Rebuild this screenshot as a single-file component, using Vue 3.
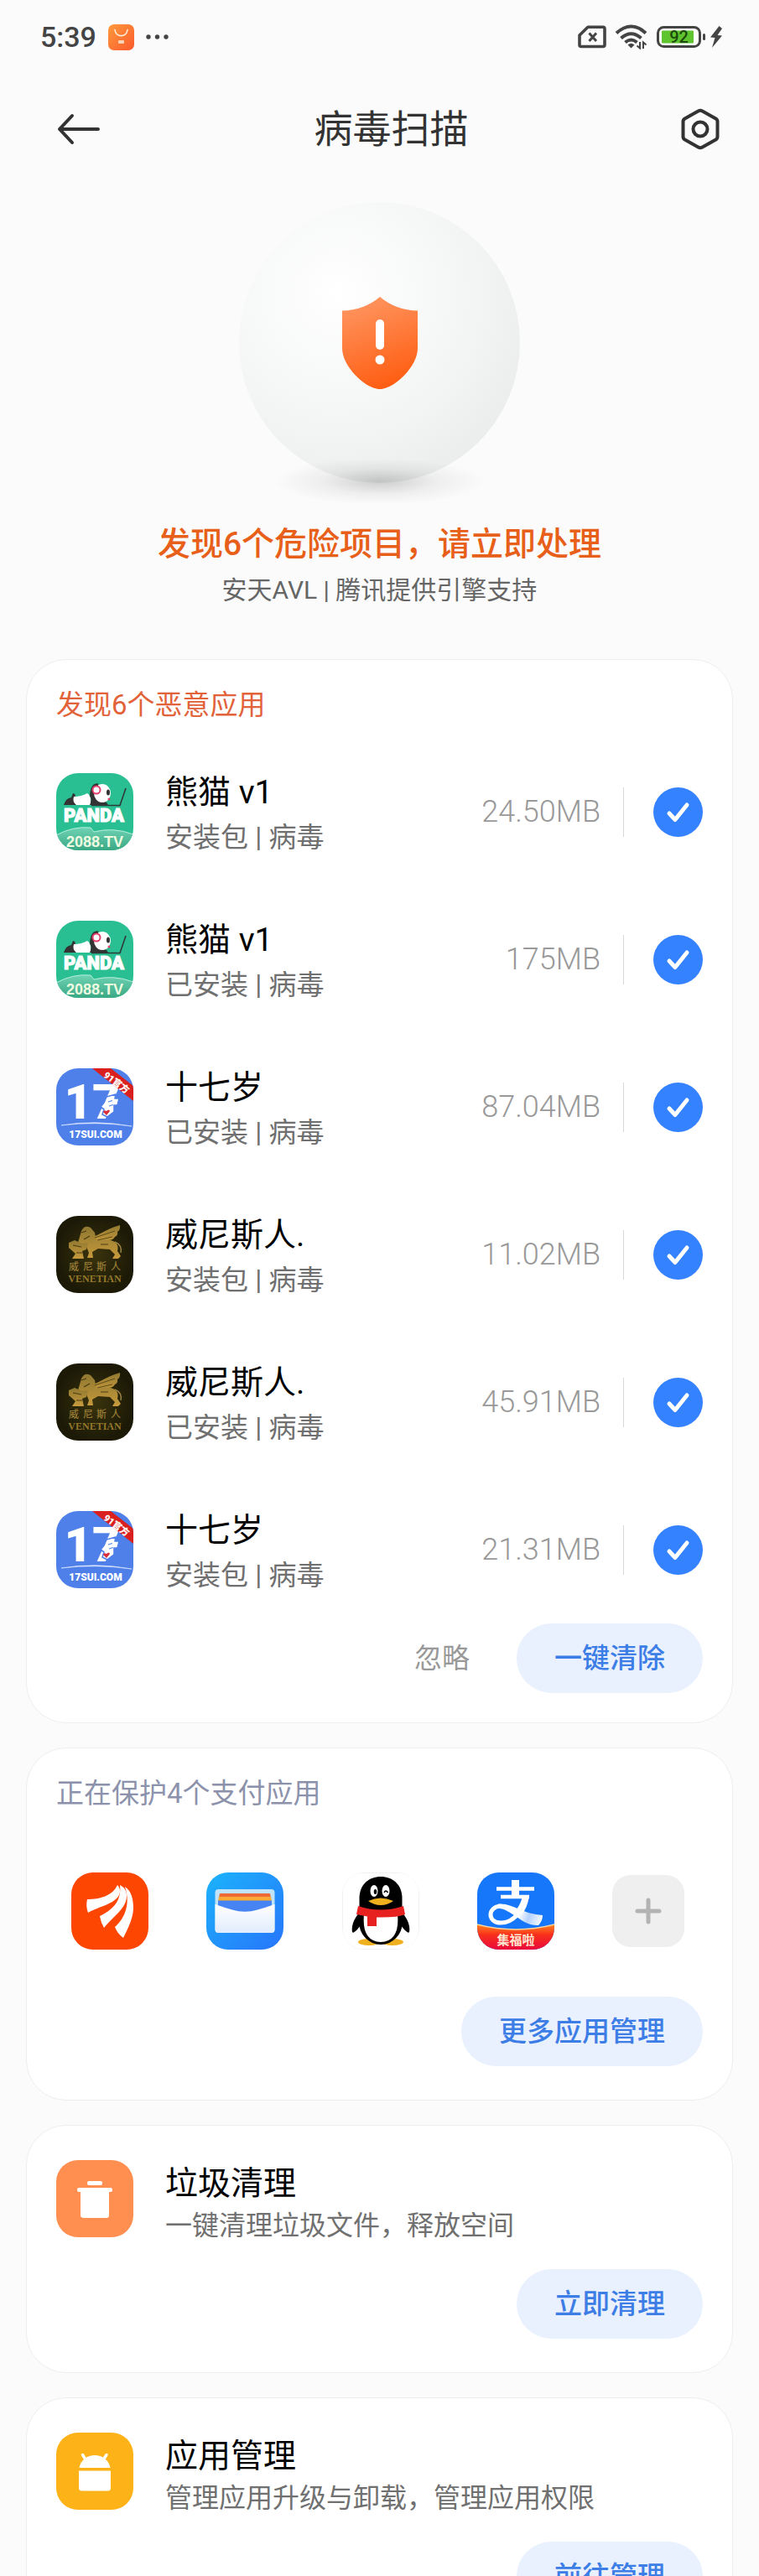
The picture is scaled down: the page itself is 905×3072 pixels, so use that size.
<script setup>
  import { ref } from 'vue';

  const threats = ref([
    { id: 1, icon: 'panda', name: '熊猫 v1', type: '安装包', size: '24.50MB', checked: true },
    { id: 2, icon: 'panda', name: '熊猫 v1', type: '已安装', size: '175MB', checked: true },
    { id: 3, icon: 'seventeen', name: '十七岁', type: '已安装', size: '87.04MB', checked: true },
    { id: 4, icon: 'venetian', name: '威尼斯人.', type: '安装包', size: '11.02MB', checked: true },
    { id: 5, icon: 'venetian', name: '威尼斯人.', type: '已安装', size: '45.91MB', checked: true },
    { id: 6, icon: 'seventeen', name: '十七岁', type: '安装包', size: '21.31MB', checked: true },
  ]);

  const tools = [
    { icon: 'trash', title: '垃圾清理', text: '一键清理垃圾文件，释放空间', action: '立即清理' },
    { icon: 'android', title: '应用管理', text: '管理应用升级与卸载，管理应用权限', action: '前往管理' },
  ];

  function removeChecked() {
    threats.value = threats.value.filter((item) => !item.checked);
  }

  function ignoreAll() {
    for (let i = 0; i < threats.value.length; i++) {
      threats.value[i].checked = false;
    }
  }
</script>

<template>
  <div class="screen">
    <div class="status-bar">
      <span class="time">5:39</span>
      <svg class="store" viewBox="0 0 31 31" width="31" height="31">
        <defs>
          <linearGradient id="store" x1="0" y1="0" x2="1" y2="1">
            <stop offset="0" stop-color="#ff9a3d" />
            <stop offset="1" stop-color="#fb5a2c" />
          </linearGradient>
        </defs>
        <rect width="31" height="31" rx="7" fill="url(#store)" />
        <path d="M8 6.500C9 16 22 16 23 6.500" fill="none" stroke="#fff1dc" stroke-width="1.600" stroke-linecap="round" />
        <rect x="12" y="19" width="7" height="4" rx="1" fill="#ffd2b5" />
      </svg>
      <svg class="more" viewBox="0 0 28 6" width="28" height="6" fill="#444">
        <circle cx="3" cy="3" r="2.700" />
        <circle cx="13.500" cy="3" r="2.700" />
        <circle cx="24" cy="3" r="2.700" />
      </svg>
      <div class="indicators">
        <svg viewBox="0 0 34 28" width="34" height="28" fill="none" stroke="#444" stroke-width="3.600" stroke-linejoin="round">
          <path d="M12 2.300H30Q32 2.300 32 4.300V23.500Q32 25.500 30 25.500H4Q2 25.500 2 23.500V12Z" />
          <path d="M13.500 9.500L22 19M22 9.500L13.500 19" stroke-width="3" />
        </svg>
        <svg viewBox="0 0 40 30" width="40" height="30" fill="none" stroke="#444" stroke-width="4">
          <path d="M2 10.500Q19.500 -5.500 37 10.500" />
          <path d="M7.500 16.500Q19.500 6 31.500 16.500" />
          <path d="M12.500 21.500Q19.500 15.500 26.500 21.500" />
          <path d="M15.500 24.500Q19.500 21 23.500 24.500L19.500 28.500Z" fill="#444" stroke="none" />
          <path d="M30 21V28.500L26.500 25.500M34 29V21.500L37.500 24.500" stroke-width="2" />
        </svg>
        <svg viewBox="0 0 59 28" width="59" height="28">
          <rect x="1.500" y="2.500" width="50" height="23" rx="7" fill="#fff" stroke="#444" stroke-width="3" />
          <rect x="6" y="6.500" width="38" height="15" rx="1" fill="#5fc52e" />
          <rect x="55" y="10" width="3" height="8" rx="1.500" fill="#444" />
          <text x="26.500" y="21" text-anchor="middle" class="battery-text">92</text>
        </svg>
        <svg viewBox="0 0 16 26" width="16" height="26" fill="#444">
          <path d="M11.500 0L1 13.500L6.500 14L3 26L15 11.500L9.500 11L15 3Z" />
        </svg>
      </div>
    </div>

    <header class="app-bar">
      <button class="icon-button" aria-label="返回">
        <svg viewBox="0 0 54 44" width="54" height="44" fill="none" stroke="#333" stroke-width="4" stroke-linecap="round" stroke-linejoin="round">
          <path d="M50 22H4M19 6L4 22L19 38" />
        </svg>
      </button>
      <h1>病毒扫描</h1>
      <button class="icon-button" aria-label="设置">
        <svg viewBox="0 0 46 50" width="46" height="50" fill="none" stroke="#333" stroke-width="4" stroke-linejoin="round">
          <path d="M20.500 3.500Q23 2 25.500 3.500L41.500 12.500Q43.500 13.700 43.500 16V34Q43.500 36.300 41.500 37.500L25.500 46.500Q23 48 20.500 46.500L4.500 37.500Q2.500 36.300 2.500 34V16Q2.500 13.700 4.500 12.500Z" />
          <circle cx="23" cy="25" r="8.500" />
        </svg>
      </button>
    </header>

    <main>
      <section class="hero">
        <div class="orb">
          <svg viewBox="0 0 92 112" width="92" height="112">
            <defs>
              <linearGradient id="shield" x1="0.300" y1="0" x2="0.600" y2="1">
                <stop offset="0" stop-color="#ff9560" />
                <stop offset="1" stop-color="#fe5c10" />
              </linearGradient>
            </defs>
            <path d="M46 1Q65 17 91 17.500V62C91 84 65 108 50 110.500Q46 111.500 42 110.500C27 108 1 84 1 62V17.500Q27 17 46 1Z" fill="url(#shield)" />
            <rect x="41" y="28" width="10" height="36" rx="5" fill="#fff" />
            <circle cx="46" cy="76" r="5.500" fill="#fff" />
          </svg>
        </div>
        <h2>发现6个危险项目，请立即处理</h2>
        <p>安天AVL | 腾讯提供引擎支持</p>
      </section>

      <section class="card">
        <h3 class="warning">发现6个恶意应用</h3>
        <ul class="threats">
          <li v-for="item in threats" :key="item.id">
            <svg v-if="item.icon == 'panda'" class="app-icon" viewBox="0 0 92 92">
              <defs>
                <linearGradient id="hill" x1="0" y1="0" x2="0" y2="1">
                  <stop offset="0" stop-color="#6fd3b4" />
                  <stop offset="1" stop-color="#3aa884" />
                </linearGradient>
              </defs>
              <rect width="92" height="92" fill="#2abf92" />
              <path d="M0 74Q20 63 41 65L45 70Q68 64 92 73V92H0Z" fill="url(#hill)" />
              <path d="M0 74Q20 63 41 65L45 70Q68 64 92 73" fill="none" stroke="#b5eedb" stroke-width="1" />
              <path d="M9 38Q11 30 18 29L20 24Q23 24 23 29L27 38Z" fill="#333" />
              <path d="M21 28Q30 28 37 24Q42 26 41 38H24Q19 34 21 28Z" fill="#fff" />
              <path d="M40 27Q40 22 42 17L46 22L60 35L62 38H40Q43 32 40 27Z" fill="#333" />
              <ellipse cx="55" cy="24" rx="10" ry="11" fill="#fff" />
              <path d="M43 19Q45 13 50 14" fill="none" stroke="#333" stroke-width="3" />
              <circle cx="48" cy="20" r="4.500" fill="#fff" stroke="#e0406b" stroke-width="2" />
              <ellipse cx="62" cy="23" rx="2" ry="3.500" fill="#333" />
              <circle cx="63" cy="31" r="1.500" fill="#e0406b" />
              <path d="M42 38.500H76L83 18" fill="none" stroke="#2e3a38" stroke-width="1.600" />
              <text x="45" y="58" text-anchor="middle" class="panda-text">PANDA</text>
              <text x="46" y="88" text-anchor="middle" class="panda-site">2088.TV</text>
            </svg>
            <svg v-else-if="item.icon == 'seventeen'" class="app-icon" viewBox="0 0 92 92">
              <rect width="92" height="92" fill="#4f80ea" />
              <text x="43" y="60" text-anchor="middle" class="seventeen-text">17</text>
              <path d="M60 34L71 31L70 36L75 36L73 44L69 44L69 52L61 58L55 55L57 49L53 46L57 41Z" fill="#fff" stroke="#4f80ea" stroke-width="1.600" stroke-linejoin="round" />
              <path d="M62 40L67 38.500M63 45L68 43.500" stroke="#4f80ea" stroke-width="1.300" />
              <path d="M60 56L56 52Q57 49 60 51Q63 48 64 51Z" fill="#d92e3c" />
              <path d="M6 68Q46 61 90 69Q46 63 6 68Z" fill="#dfe9ff" stroke="#dfe9ff" stroke-width="0.600" />
              <text x="47" y="83" text-anchor="middle" class="seventeen-site">17SUI.COM</text>
              <path d="M43 0H65L92 21V39Z" fill="#d9201f" />
              <text x="72" y="21" text-anchor="middle" transform="rotate(37 72 17)" class="ribbon-text">91官方</text>
            </svg>
            <svg v-else class="app-icon" viewBox="0 0 92 92">
              <defs>
                <radialGradient id="dark">
                  <stop offset="0" stop-color="#3a330d" />
                  <stop offset="1" stop-color="#1c1a07" />
                </radialGradient>
                <linearGradient id="gold" x1="0" y1="0" x2="0" y2="1">
                  <stop offset="0" stop-color="#8f7830" />
                  <stop offset="1" stop-color="#c79a3c" />
                </linearGradient>
              </defs>
              <rect width="92" height="92" fill="url(#dark)" />
              <g fill="url(#gold)">
                <path d="M41 26C50 24 58 16 76 11Q77 16 73 19Q74 23 70 25Q68 29 62 29L48 33Z" />
                <path d="M30 18Q34 10 41 14L46 20L48 30Q62 26 70 31Q75 35 73 42L77 48L74 51H67L70 46L64 40L50 39L43 43L44 50H37L39 44L35 34L26 32Z" />
                <path d="M15 32L22 29L31 33L38 32L36 40L31 42L33 51H19L23 45L15 38Z" />
              </g>
              <path d="M70 31Q79 35 77 44" fill="none" stroke="#9a8242" stroke-width="1.500" />
              <path d="M46 26L70 18M49 29L67 25" stroke="#5d4b1a" stroke-width="1" />
              <path d="M30 20L36 18M33 28L40 24M20 35L30 37M24 44H31M53 34H62" stroke="#4a3c14" stroke-width="1.200" />
              <text y="65" class="venetian-cn">
                <tspan x="15">威</tspan><tspan x="32">尼</tspan><tspan x="48">斯</tspan><tspan x="65">人</tspan>
              </text>
              <text x="46" y="79" text-anchor="middle" class="venetian-en">VENETIAN</text>
            </svg>
            <div class="info">
              <label class="name" :for="'threat-' + item.id">{{ item.name }}</label>
              <span class="detail">{{ item.type }} | 病毒</span>
            </div>
            <span class="size">{{ item.size }}</span>
            <div class="check">
              <input :id="'threat-' + item.id" v-model="item.checked" type="checkbox">
              <svg v-if="item.checked" viewBox="0 0 59 59" width="59" height="59" fill="none" stroke="#fff" stroke-width="5" stroke-linecap="round" stroke-linejoin="round">
                <path d="M19 31L26 38.500L40 21" />
              </svg>
            </div>
          </li>
        </ul>
        <div class="actions">
          <button class="plain" @click="ignoreAll">忽略</button>
          <button class="pill" @click="removeChecked">一键清除</button>
        </div>
      </section>

      <section class="card roomy">
        <h3>正在保护4个支付应用</h3>
        <div class="pay-apps">
          <svg class="app-icon" viewBox="0 0 92 92">
            <rect width="92" height="92" fill="#fe4603" />
            <g fill="#fff">
              <path d="M19 32C34 32 49 28 55 15C58 18 59 22 57 27C51 38 34 40 20 48Q17 40 19 32Z" />
              <path d="M34 52C50 44 60 34 58 15C64 18 66 22 66 28C66 43 50 52 39 66Q35 59 34 52Z" />
              <path d="M64 17C72 22 74 33 74 42C74 54 68 66 62 78Q55 73 52 65C66 52 70 36 64 17Z" />
            </g>
          </svg>
          <svg class="app-icon" viewBox="0 0 92 92">
            <defs>
              <linearGradient id="wallet" x1="0" y1="0" x2="1" y2="1">
                <stop offset="0" stop-color="#1bb3fb" />
                <stop offset="1" stop-color="#2875fb" />
              </linearGradient>
              <linearGradient id="pocket" x1="0" y1="0" x2="0" y2="1">
                <stop offset="0" stop-color="#fff" />
                <stop offset="1" stop-color="#e0ecfd" />
              </linearGradient>
            </defs>
            <rect width="92" height="92" fill="url(#wallet)" />
            <rect x="10.500" y="20" width="71" height="52" rx="4" fill="#bfe3fb" />
            <path d="M16 25H76L77 30H15Z" fill="#ee6a35" />
            <path d="M15 29H77L78 34H14Z" fill="#fbab35" />
            <path d="M14 33.500H78V50H14Z" fill="#4683f3" />
            <path d="M10.500 38Q22 42 31 44.500Q46 49 61 44.500Q70 42 81.500 38V68Q81.500 72 77.500 72H14.500Q10.500 72 10.500 68Z" fill="url(#pocket)" />
          </svg>
          <svg class="app-icon" viewBox="0 0 92 92">
            <rect x="0.500" y="0.500" width="91" height="91" rx="24" fill="#fff" stroke="#f1f1f1" />
            <ellipse cx="32" cy="83" rx="13" ry="4" fill="#efb01f" />
            <ellipse cx="60" cy="83" rx="13" ry="4" fill="#efb01f" />
            <path d="M21 47Q10 60 12 71Q14 74 22 63ZM71 47Q82 60 80 71Q78 74 70 63Z" />
            <ellipse cx="46" cy="59" rx="26" ry="27" />
            <path d="M20.500 44V30C21 14 32 5 46 5S71 14 71.500 30V44Z" />
            <path d="M26 50H66Q69 82 46 83Q23 82 26 50Z" fill="#fff" />
            <ellipse cx="38" cy="22" rx="4.500" ry="7" fill="#fff" />
            <ellipse cx="52" cy="22" rx="4.500" ry="7" fill="#fff" />
            <ellipse cx="39.500" cy="23" rx="1.800" ry="3" />
            <path d="M50 24Q52 20 54.500 24" fill="none" stroke="#000" stroke-width="1.500" />
            <path d="M31 34Q46 27 61 34Q54 39 46 39T31 34Z" fill="#f0b01e" />
            <path d="M19 40Q46 49 73 40L75 50Q66 54 41 53.500V64H30V52.500L17 50Z" fill="#e6211f" />
          </svg>
          <svg class="app-icon" viewBox="0 0 92 92">
            <defs>
              <linearGradient id="festival" x1="0" y1="0" x2="0" y2="1">
                <stop offset="0" stop-color="#ff8a1e" />
                <stop offset="0.400" stop-color="#f9301c" />
                <stop offset="1" stop-color="#ea0a3c" />
              </linearGradient>
              <linearGradient id="ribbon" gradientUnits="userSpaceOnUse" x1="50" y1="50" x2="78" y2="60">
                <stop offset="0" stop-color="#fff" />
                <stop offset="0.400" stop-color="#b5d2ff" />
                <stop offset="1" stop-color="#fff" />
              </linearGradient>
            </defs>
            <rect width="92" height="92" fill="#1677fb" />
            <g fill="none" stroke="#fff">
              <path d="M23 19.500H68M28 29H62" stroke-width="4.500" />
              <path d="M45.500 9V29" stroke-width="9" />
              <path d="M58 28C56 44 44 60 28 60C12 60 12 41 28 40" stroke-width="5" />
            </g>
            <path d="M24 38C40 35 54 50 78 51Q78 58 73 63C54 64 42 45 27 43Z" fill="url(#ribbon)" />
            <path d="M62 28Q60 42 53 50L46 45Q52 38 54 28Z" fill="#fff" />
            <path d="M0 62Q46 74 92 62V92H0Z" fill="url(#festival)" />
            <path d="M0 62Q46 74 92 62" fill="none" stroke="#ffd6a0" stroke-width="1.500" />
            <text x="46" y="86" text-anchor="middle" class="festival-text">集福啦</text>
          </svg>
          <button class="add" aria-label="添加">
            <svg viewBox="0 0 32 32" width="32" height="32" stroke="#b3b3b3" stroke-width="5" stroke-linecap="round">
              <path d="M16 3V29M3 16H29" />
            </svg>
          </button>
        </div>
        <div class="actions">
          <button class="pill">更多应用管理</button>
        </div>
      </section>

      <section v-for="tool in tools" :key="tool.icon" class="card roomy tool">
        <div class="tool-head">
          <svg v-if="tool.icon == 'trash'" class="app-icon" viewBox="0 0 92 92">
            <rect width="92" height="92" fill="#ff8f50" />
            <g fill="#fff">
              <rect x="37" y="25" width="18" height="5" rx="2" />
              <path d="M27 33H65Q67 33 67 36Q67 38 65 38H63V66Q63 69 60 69H33Q29 69 29 66V38H27Q25 38 25 36Q25 33 27 33Z" />
            </g>
          </svg>
          <svg v-else class="app-icon" viewBox="0 0 92 92">
            <rect width="92" height="92" fill="#fdb217" />
            <g fill="#fff">
              <path d="M27.500 42C29 33 37 27 46 27S63 33 64.500 42Z" />
              <path d="M27 45.500H65V66Q65 69.500 61.500 69.500H30.500Q27 69.500 27 66Z" />
              <path d="M31.500 26.500L35 32M60 26.500L56.500 32" stroke="#fff" stroke-width="3.500" stroke-linecap="round" />
            </g>
          </svg>
          <div class="info">
            <h3>{{ tool.title }}</h3>
            <p>{{ tool.text }}</p>
          </div>
        </div>
        <div class="actions">
          <button class="pill">{{ tool.action }}</button>
        </div>
      </section>
    </main>
  </div>
</template>

<style>
  body {
    margin: 0;
    background: #fbfbfb;
  }
</style>

<style scoped>
  .screen {
    height: 100vh;
    overflow: hidden;
    background: #fbfbfb;
    color: #000;
    font-family: Roboto, "Noto Sans CJK SC", sans-serif;
  }

  h1, h2, h3, p, ul {
    margin: 0;
    padding: 0;
    font-weight: 400;
  }

  button {
    border: none;
    padding: 0;
    background: none;
    font-family: inherit;
    line-height: 40px;
    cursor: pointer;
  }

  svg {
    display: block;
    flex: none;
  }

  /* status bar */
  .status-bar {
    display: flex;
    align-items: center;
    height: 88px;
    padding: 0 43px 0 48px;
    color: #444;
  }

  .time {
    font-size: 34px;
    font-weight: 500;
  }

  .store {
    margin-left: 14px;
  }

  .more {
    margin-left: 14px;
  }

  .indicators {
    display: flex;
    align-items: center;
    gap: 10px;
    margin-left: auto;
  }

  .indicators svg:last-child {
    margin-left: -6px;
  }

  .battery-text {
    font-size: 20px;
    font-weight: 500;
    fill: #1d4a0c;
  }

  /* title row */
  .app-bar {
    display: flex;
    align-items: center;
    justify-content: space-between;
    height: 132px;
    padding: 0 47px 0 67px;
  }

  .app-bar h1 {
    color: #333;
    font-size: 46px;
    line-height: 56px;
  }

  .hero {
    display: flex;
    flex-direction: column;
    align-items: center;
    padding: 21px 0 62px;
  }

  .orb {
    position: relative;
    display: flex;
    align-items: center;
    justify-content: center;
    width: 335px;
    height: 335px;
    border-radius: 50%;
    background: radial-gradient(circle at 35% 32%, #fff 0%, #f5f6f6 45%, #ebeded 80%, #f0f2f1 100%);
  }

  .orb::after {
    content: "";
    position: absolute;
    bottom: -26px;
    left: 42px;
    right: 42px;
    height: 56px;
    background: radial-gradient(closest-side, rgba(0, 0, 0, 0.18), rgba(0, 0, 0, 0.05) 55%, rgba(0, 0, 0, 0));
  }

  .hero h2 {
    margin-top: 47px;
    color: #e75f18;
    font-size: 39px;
    font-weight: 500;
    line-height: 52px;
  }

  .hero p {
    margin-top: 9px;
    color: #666;
    font-size: 30px;
    line-height: 40px;
  }

  main {
    padding: 0 31px;
  }

  .card {
    margin-bottom: 29px;
    padding: 35px;
    border: 1px solid #eee;
    border-radius: 48px;
    background: #fff;
  }

  .card.roomy {
    padding-bottom: 40px;
  }

  .card > h3 {
    color: #8c92ab;
    font-size: 33px;
    line-height: 38px;
  }

  .card > h3.warning {
    color: #e2623a;
  }

  .threats {
    margin-top: 20px;
  }

  .threats li {
    display: flex;
    align-items: center;
    height: 176px;
    list-style: none;
  }

  .app-icon {
    width: 92px;
    height: 92px;
    border-radius: 26px;
  }

  .info {
    display: flex;
    flex: 1;
    flex-direction: column;
    gap: 6px;
    margin-left: 38px;
    padding-top: 8px;
  }

  .name, .info h3 {
    font-size: 39px;
    line-height: 48px;
  }

  .detail, .info p {
    color: #707070;
    font-size: 33px;
    line-height: 48px;
  }

  .size {
    padding-right: 27px;
    color: #999;
    font-size: 36px;
    font-weight: 300;
    line-height: 59px;
    border-right: 1px solid #d8d8d8;
  }

  .check {
    display: grid;
    margin-left: 35px;
  }

  .check > * {
    grid-area: 1 / 1;
  }

  .check input {
    appearance: none;
    width: 59px;
    height: 59px;
    margin: 0;
    border-radius: 50%;
    background: #e6e6e6;
    cursor: pointer;
  }

  .check input:checked {
    background: #3482ff;
  }

  .check svg {
    pointer-events: none;
  }

  .actions {
    display: flex;
    justify-content: flex-end;
    gap: 56px;
  }

  .plain {
    color: #999;
    font-size: 33px;
  }

  .pill {
    height: 83px;
    padding: 0 45px;
    border-radius: 42px;
    background: #e9f0fe;
    color: #3c7de6;
    font-size: 33px;
    font-weight: 500;
  }

  /* protected apps */
  .pay-apps {
    display: flex;
    align-items: center;
    justify-content: space-between;
    margin: 75px 0 56px;
    padding: 0 22px 0 18px;
  }

  .add {
    display: flex;
    align-items: center;
    justify-content: center;
    width: 86px;
    height: 86px;
    border-radius: 22px;
    background: #efefef;
  }

  /* tool cards */
  .tool {
    padding-top: 41px;
  }

  .tool-head {
    display: flex;
    align-items: flex-start;
    margin-bottom: 28px;
  }

  .tool .info {
    gap: 2px;
    padding-top: 4px;
  }

  .tool .info p {
    font-size: 32px;
  }

  /* lettering inside the app icons */
  .panda-text {
    font-size: 22px;
    font-weight: 900;
    fill: #fff;
    stroke: #fff;
    stroke-width: 1px;
  }

  .panda-site {
    font-family: "Liberation Sans", sans-serif;
    font-size: 18px;
    font-weight: 700;
    fill: #effbe0;
  }

  .seventeen-text {
    font-size: 58px;
    font-weight: 900;
    fill: #fff;
  }

  .seventeen-site {
    font-size: 12px;
    font-weight: 900;
    fill: #fff;
  }

  .ribbon-text {
    font-size: 11px;
    font-weight: 900;
    fill: #fff;
  }

  .venetian-cn {
    font-size: 12px;
    fill: #a98a3c;
  }

  .venetian-en {
    font-family: "Liberation Serif", serif;
    font-size: 12px;
    font-weight: 700;
    fill: #94772a;
  }

  .festival-text {
    font-size: 15px;
    font-weight: 700;
    fill: #ffe9d2;
  }
</style>
